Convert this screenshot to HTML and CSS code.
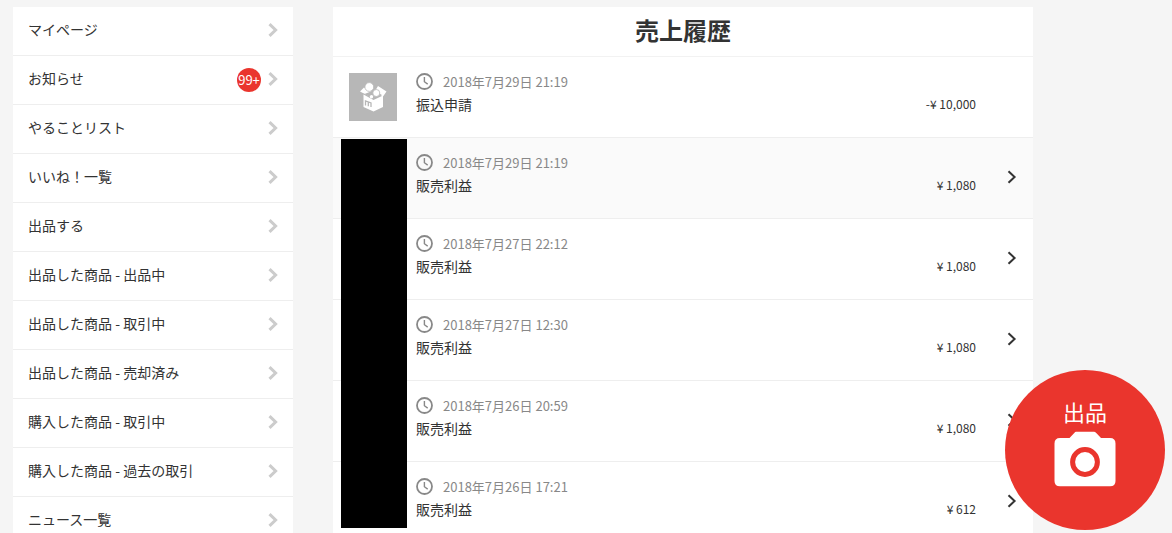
FILE: index.html
```html
<!DOCTYPE html>
<html lang="ja">
<head>
    <meta charset="UTF-8">
    <meta name="viewport" content="width=device-width, initial-scale=1.0">
    <title>売上履歴</title>
    <link rel="stylesheet" href="styles.css">
</head>
<body>

<!-- アイコン -->
<svg class="icon-defs" width="0" height="0" aria-hidden="true">
    <symbol id="arrow" viewBox="0 0 10 14">
        <path d="M1.5 1.2 L7.6 7 L1.5 12.8" fill="none" stroke="currentColor"/>
    </symbol>
    <symbol id="clock" viewBox="0 0 18 18">
        <circle cx="8.5" cy="8.5" r="7.5" fill="none" stroke="currentColor" stroke-width="1.8"/>
        <path d="M8.4 4 V8.7 L11.7 11.1" fill="none" stroke="currentColor" stroke-width="1.4"/>
    </symbol>
</svg>

<div class="container">
    <!-- サイドメニュー -->
    <nav class="side">
        <ul>
            <li><a href="#">マイページ<svg class="arrow"><use href="#arrow"/></svg></a></li>
            <li><a href="#">お知らせ<span class="badge">99+</span><svg class="arrow"><use href="#arrow"/></svg></a></li>
            <li><a href="#">やることリスト<svg class="arrow"><use href="#arrow"/></svg></a></li>
            <li><a href="#">いいね！一覧<svg class="arrow"><use href="#arrow"/></svg></a></li>
            <li><a href="#">出品する<svg class="arrow"><use href="#arrow"/></svg></a></li>
            <li><a href="#">出品した商品 - 出品中<svg class="arrow"><use href="#arrow"/></svg></a></li>
            <li><a href="#">出品した商品 - 取引中<svg class="arrow"><use href="#arrow"/></svg></a></li>
            <li><a href="#">出品した商品 - 売却済み<svg class="arrow"><use href="#arrow"/></svg></a></li>
            <li><a href="#">購入した商品 - 取引中<svg class="arrow"><use href="#arrow"/></svg></a></li>
            <li><a href="#">購入した商品 - 過去の取引<svg class="arrow"><use href="#arrow"/></svg></a></li>
            <li><a href="#">ニュース一覧<svg class="arrow"><use href="#arrow"/></svg></a></li>
        </ul>
    </nav>

    <!-- 売上履歴 -->
    <main class="content">
        <h1>売上履歴</h1>
        <div class="history">
            <div class="row">
                <svg class="thumb" viewBox="0 0 48 48">
                    <rect width="48" height="48" fill="#b7b7b7"/>
                    <path d="M15 14.5 L24 19.5 L21 23.5 L11 18.5 Z M29 13 L37.5 18.5 L34 23.5 L25.5 19 Z" fill="#fff"/>
                    <path d="M14.5 21.5 L24.5 27 L34 22.5 V34 L24.5 38.5 L14.5 34 Z" fill="#fff"/>
                    <path d="M15.5 21 L24.5 17.5 L33 22 L24.5 26 Z" fill="#b7b7b7"/>
                    <circle cx="20.3" cy="14" r="4.4" fill="#fff" stroke="#b7b7b7" stroke-width=".8"/>
                    <circle cx="27.3" cy="20" r="3.5" fill="#fff" stroke="#b7b7b7" stroke-width=".8"/>
                    <circle cx="22.5" cy="23.7" r="1.7" fill="#fff"/>
                    <path d="M16.5 32.5 V28 L22 30 V34 M19.3 29.3 V33.2" fill="none" stroke="#b7b7b7" stroke-width="1.3"/>
                </svg>
                <div class="info">
                    <time><svg class="clock"><use href="#clock"/></svg>2018年7月29日 21:19</time>
                    <div class="detail"><span>振込申請</span><span class="price">-¥ 10,000</span></div>
                </div>
            </div>
            <a class="row active" href="#">
                <div class="thumb"></div>
                <div class="info">
                    <time><svg class="clock"><use href="#clock"/></svg>2018年7月29日 21:19</time>
                    <div class="detail"><span>販売利益</span><span class="price">¥ 1,080</span></div>
                </div>
                <svg class="arrow"><use href="#arrow"/></svg>
            </a>
            <a class="row" href="#">
                <div class="thumb"></div>
                <div class="info">
                    <time><svg class="clock"><use href="#clock"/></svg>2018年7月27日 22:12</time>
                    <div class="detail"><span>販売利益</span><span class="price">¥ 1,080</span></div>
                </div>
                <svg class="arrow"><use href="#arrow"/></svg>
            </a>
            <a class="row" href="#">
                <div class="thumb"></div>
                <div class="info">
                    <time><svg class="clock"><use href="#clock"/></svg>2018年7月27日 12:30</time>
                    <div class="detail"><span>販売利益</span><span class="price">¥ 1,080</span></div>
                </div>
                <svg class="arrow"><use href="#arrow"/></svg>
            </a>
            <a class="row" href="#">
                <div class="thumb"></div>
                <div class="info">
                    <time><svg class="clock"><use href="#clock"/></svg>2018年7月26日 20:59</time>
                    <div class="detail"><span>販売利益</span><span class="price">¥ 1,080</span></div>
                </div>
                <svg class="arrow"><use href="#arrow"/></svg>
            </a>
            <a class="row" href="#">
                <div class="thumb"></div>
                <div class="info">
                    <time><svg class="clock"><use href="#clock"/></svg>2018年7月26日 17:21</time>
                    <div class="detail"><span>販売利益</span><span class="price">¥ 612</span></div>
                </div>
                <svg class="arrow"><use href="#arrow"/></svg>
            </a>
            <!-- 商品画像を隠す -->
            <div class="mask"></div>
        </div>
    </main>
</div>

<!-- 出品ボタン -->
<a class="sell" href="#">
    <span>出品</span>
    <svg class="camera" viewBox="0 0 62 56">
        <path d="M22 .7 H40 Q41 .7 42 1.7 L47 7 H56 Q61.5 7 61.5 12.5 V50 Q61.5 55.3 56 55.3 H6 Q.5 55.3 .5 50 V12.5 Q.5 7 6 7 H15.5 L20.5 1.7 Q21.2 .7 22 .7 Z" fill="#fff"/>
        <circle cx="31" cy="31" r="12.4" fill="none" stroke="#ea352d" stroke-width="5"/>
    </svg>
</a>

</body>
</html>
```

FILE: styles.css
```css
* {
    box-sizing: border-box;
}
body {
    margin: 0;
    background: #f5f5f5;
    color: #333;
    font-family: "Noto Sans CJK JP", sans-serif;
    font-size: 14px;
    line-height: 20px;
}
a {
    color: inherit;
    text-decoration: none;
}
.icon-defs {
    position: absolute;
}
.container {
    display: flex;
    gap: 40px;
    max-width: 1172px;
    padding: 7px 139px 0 13px;
}

/* サイドメニュー */
.side {
    flex: 0 0 280px;
}
.side ul {
    margin: 0;
    padding: 0;
    list-style: none;
    background: #fff;
}
.side li {
    border-bottom: 1px solid #eee;
}
.side a {
    display: flex;
    align-items: center;
    height: 48px;
    padding: 0 15px 4px;
}
.arrow {
    width: 10px;
    height: 14px;
    flex: none;
    margin-bottom: 2px;
    stroke-width: 2;
}
.side .arrow {
    margin: 2px 0 0 auto;
    color: #ccc;
    stroke-width: 3;
}
.badge {
    width: 24px;
    height: 24px;
    margin: 4px 7px 0 auto;
    border-radius: 50%;
    background: #ea352d;
    color: #fff;
    font-size: 13px;
    line-height: 24px;
    display: flex;
    justify-content: center;
}
.side .badge + .arrow {
    margin-left: 0;
}

/* 売上履歴 */
.content {
    flex: 1;
    min-width: 0;
    background: #fff;
}
h1 {
    margin: 0;
    padding-bottom: 4px;
    border-bottom: 1px solid #f2f2f2;
    font-size: 24px;
    line-height: 45px;
    text-align: center;
}
.history {
    position: relative;
}
.row {
    display: flex;
    align-items: center;
    height: 81px;
    padding: 0 16px;
    border-bottom: 1px solid #eee;
}
.row.active,
a.row:hover {
    background: #fafafa;
}
.thumb {
    width: 48px;
    height: 48px;
    flex: none;
}
.info {
    flex: 1;
    margin: 0 31px 0 19px;
    padding-bottom: 10px;
}
.row > .info:last-child {
    margin-right: 41px;
}
time {
    display: flex;
    align-items: center;
    color: #888;
    font-size: 13px;
    line-height: 24px;
}
.clock {
    width: 18px;
    height: 18px;
    margin-right: 9px;
}
.detail {
    display: flex;
    justify-content: space-between;
}
.price {
    font-size: 12px;
}
.mask {
    position: absolute;
    top: 82px;
    bottom: 15px;
    left: 8px;
    width: 66px;
    background: #000;
}

/* 出品ボタン */
.sell {
    position: fixed;
    right: 7px;
    bottom: 3px;
    display: flex;
    flex-direction: column;
    align-items: center;
    width: 160px;
    height: 160px;
    padding-top: 25px;
    border-radius: 50%;
    background: #ea352d;
    color: #fff;
    font-size: 22px;
    line-height: 32px;
}
.camera {
    width: 62px;
    height: 56px;
    margin-top: 4px;
}
```
